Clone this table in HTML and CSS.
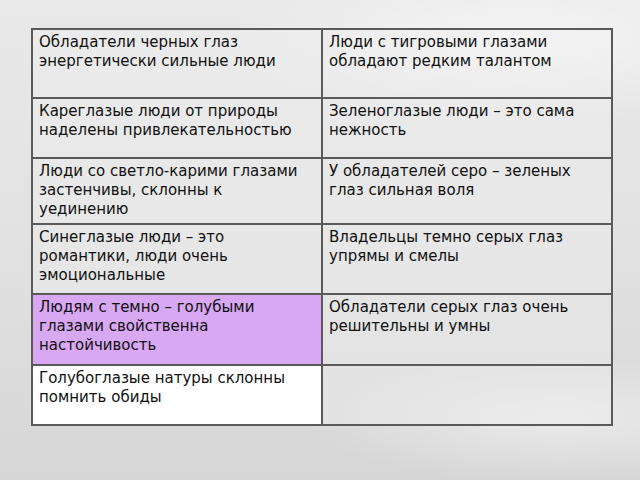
FILE: index.html
```html
<!DOCTYPE html>
<html lang="ru">
<head>
<meta charset="utf-8">
<link rel="stylesheet" href="styles.css">
</head>
<body>
<div class="slide">
  <table class="eyes">
    <tr class="r1">
      <td>Обладатели черных глаз энергетически сильные люди</td>
      <td>Люди с тигровыми глазами обладают редким талантом</td>
    </tr>
    <tr class="r2">
      <td>Кареглазые люди от природы наделены привлекательностью</td>
      <td>Зеленоглазые люди – это сама нежность</td>
    </tr>
    <tr class="r3">
      <td>Люди со светло-карими глазами застенчивы, склонны к уединению</td>
      <td>У обладателей серо – зеленых глаз сильная воля</td>
    </tr>
    <tr class="r4">
      <td>Синеглазые люди – это романтики, люди очень эмоциональные</td>
      <td>Владельцы темно серых глаз упрямы и смелы</td>
    </tr>
    <tr class="r5">
      <td class="violet">Людям с темно – голубыми глазами свойственна настойчивость</td>
      <td>Обладатели серых глаз очень решительны и умны</td>
    </tr>
    <tr class="r6">
      <td class="white">Голубоглазые натуры склонны помнить обиды</td>
      <td></td>
    </tr>
  </table>
</div>
</body>
</html>
```
FILE: styles.css
```css
html, body {
  margin: 0;
  padding: 0;
}
body {
  width: 640px;
  height: 480px;
  overflow: hidden;
  background:
    radial-gradient(ellipse 420px 120px at 520px 40px, rgba(255,255,255,0.55), rgba(255,255,255,0) 70%),
    radial-gradient(ellipse 360px 90px at 560px 420px, rgba(255,255,255,0.45), rgba(255,255,255,0) 70%),
    linear-gradient(180deg, #e9e9e9 0%, #e2e2e2 50%, #d6d6d6 100%);
  font-family: "DejaVu Sans", "Liberation Sans", sans-serif;
}
.slide {
  padding: 28px 0 0 31px;
}
.eyes {
  border-collapse: collapse;
  table-layout: fixed;
  width: 582px;
  border: 2px solid #4a4a4a;
}
.eyes td {
  width: 50%;
  border: 2px solid #5a5a5a;
  vertical-align: top;
  padding: 3px 6px 0 6px;
  font-size: 15px;
  line-height: 19px;
  color: #111;
  background: rgba(240,240,240,0.35);
}
.eyes td.violet {
  background: #d9a8f3;
}
.eyes td.white {
  background: #ffffff;
}
.r1 { height: 69px; }
.r2 { height: 60px; }
.r3 { height: 66px; }
.r4 { height: 70px; }
.r5 { height: 71px; }
.r6 { height: 60px; }
```
